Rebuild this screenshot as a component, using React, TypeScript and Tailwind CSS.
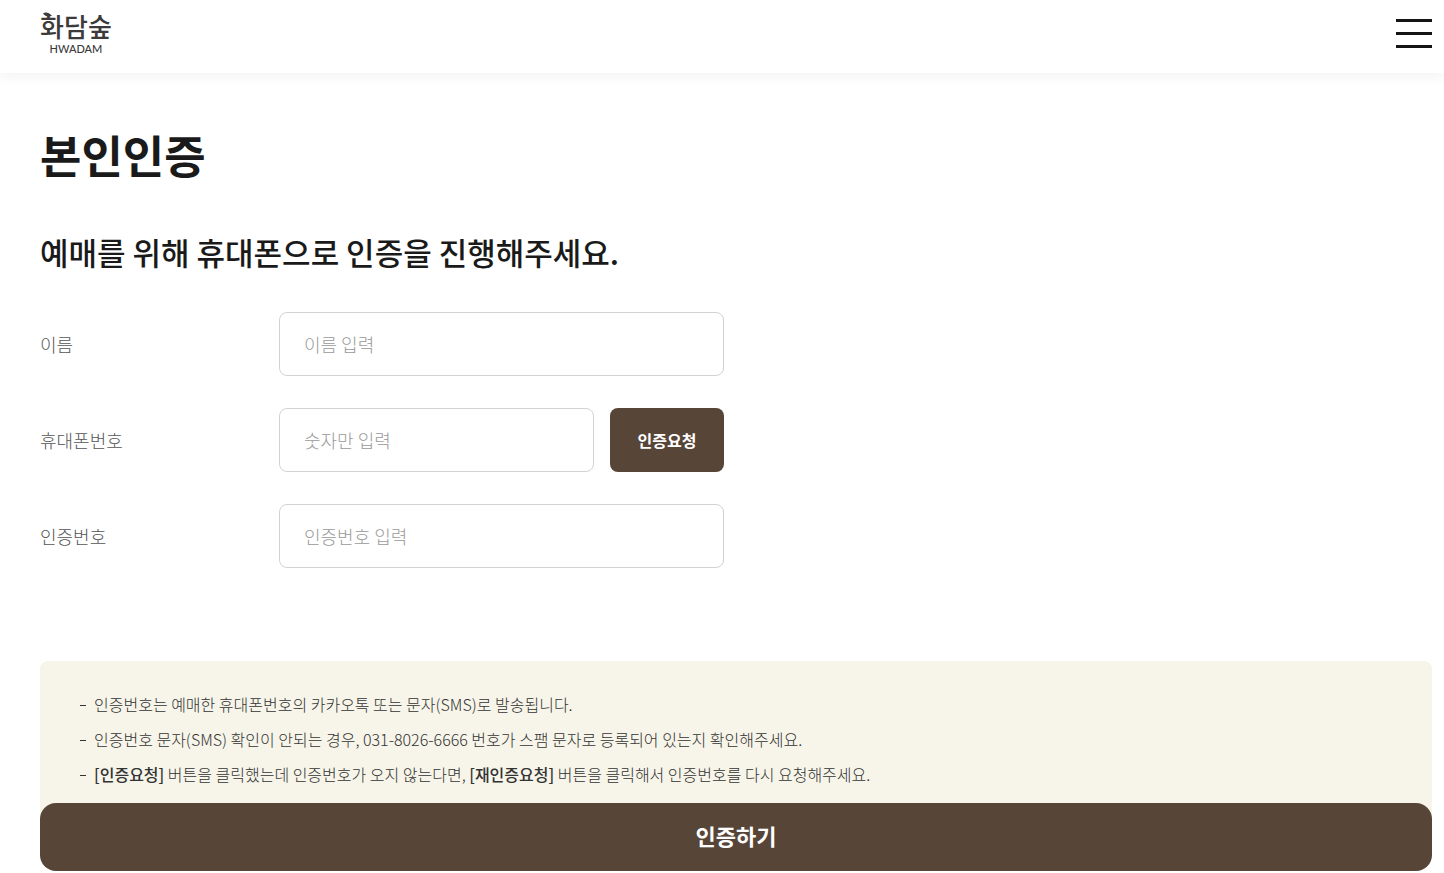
import type { ReactNode } from "react";

const inputClass =
  "h-16 w-full min-w-0 rounded-lg border border-[#d2d2d2] bg-white px-6 text-lg font-light text-[#333] placeholder:text-[#999] focus:border-[#574537] focus:outline-none";

function Logo() {
  return (
    <a href="#" aria-label="화담숲 HWADAM" className="block text-[#3c3a3a]">
      <svg viewBox="0 0 72 50" className="h-[50px] w-[72px] overflow-visible" fill="currentColor" aria-hidden="true">
        <path d="M3 7.6C5 5.4 9 6.2 12 9.8 9 11.2 5 10.6 3 7.6Z" />
        <text x="36" y="31" textAnchor="middle" fontSize="26" fontWeight="500" className="font-['Noto_Sans_CJK_KR',sans-serif]">
          화담숲
        </text>
        <text x="36" y="47" textAnchor="middle" fontSize="11" fontWeight="500" className="font-['Lato',sans-serif]">
          HWADAM
        </text>
      </svg>
    </a>
  );
}

function Header() {
  return (
    <header className="flex h-[73px] items-start justify-between bg-white pt-1.5 pr-3 pl-10 shadow-[0_4px_12px_rgba(0,0,0,0.05)]">
      <Logo />
      <button type="button" aria-label="메뉴 열기" className="mt-[13px] flex flex-col gap-[10px]">
        <span className="h-[3px] w-9 bg-[#151515]" />
        <span className="h-[3px] w-9 bg-[#151515]" />
        <span className="h-[3px] w-9 bg-[#151515]" />
      </button>
    </header>
  );
}

function Field({ id, label, placeholder, type = "text", children }: {
  id: string;
  label: string;
  placeholder: string;
  type?: string;
  children?: ReactNode;
}) {
  return (
    <div className="flex items-center">
      <label htmlFor={id} className="w-[239px] shrink-0 text-lg font-light text-[#555]">
        {label}
      </label>
      <div className="flex min-w-0 flex-1 gap-4">
        <input id={id} type={type} placeholder={placeholder} className={inputClass} />
        {children}
      </div>
    </div>
  );
}

function Notice({ children }: { children: ReactNode }) {
  return (
    <li className="flex gap-2">
      <span aria-hidden="true" className="mt-[17px] h-px w-1.5 shrink-0 bg-[#333]" />
      <p>{children}</p>
    </li>
  );
}

export default function App() {
  return (
    <div className="bg-white font-['Noto_Sans_CJK_KR',sans-serif] text-[#1a1a1a]">
      <Header />
      <main className="pt-12 pr-3 pl-10">
        <h1 className="text-[45px] leading-[68px] font-bold">본인인증</h1>
        <form onSubmit={(e) => e.preventDefault()}>
          <h2 className="mt-10 text-[31px] leading-[46px] font-medium">
            예매를 위해 휴대폰으로 인증을 진행해주세요.
          </h2>
          <div className="mt-[37px] flex max-w-[684px] flex-col gap-8">
            <Field id="name" label="이름" placeholder="이름 입력" />
            <Field id="phone" label="휴대폰번호" placeholder="숫자만 입력" type="tel">
              <button
                type="button"
                className="h-16 w-[114px] shrink-0 rounded-lg bg-[#574537] text-base font-bold text-white"
              >
                인증요청
              </button>
            </Field>
            <Field id="code" label="인증번호" placeholder="인증번호 입력" />
          </div>
          <ul className="mt-[93px] flex flex-col gap-[3px] rounded-lg bg-[#f7f5e9] px-10 pt-[27px] pb-[31px] text-base leading-8 font-light text-[#333]">
            <Notice>인증번호는 예매한 휴대폰번호의 카카오톡 또는 문자(SMS)로 발송됩니다.</Notice>
            <Notice>
              인증번호 문자(SMS) 확인이 안되는 경우, 031-8026-6666 번호가 스팸 문자로 등록되어 있는지
              확인해주세요.
            </Notice>
            <Notice>
              <strong className="font-medium">[인증요청]</strong> 버튼을 클릭했는데 인증번호가 오지 않는다면,{" "}
              <strong className="font-medium">[재인증요청]</strong> 버튼을 클릭해서 인증번호를 다시 요청해주세요.
            </Notice>
          </ul>
          <button
            type="submit"
            className="relative -mt-[18px] mb-0.5 block h-[68px] w-full rounded-2xl bg-[#574537] pb-1 text-[22px] font-bold text-white"
          >
            인증하기
          </button>
        </form>
      </main>
    </div>
  );
}
